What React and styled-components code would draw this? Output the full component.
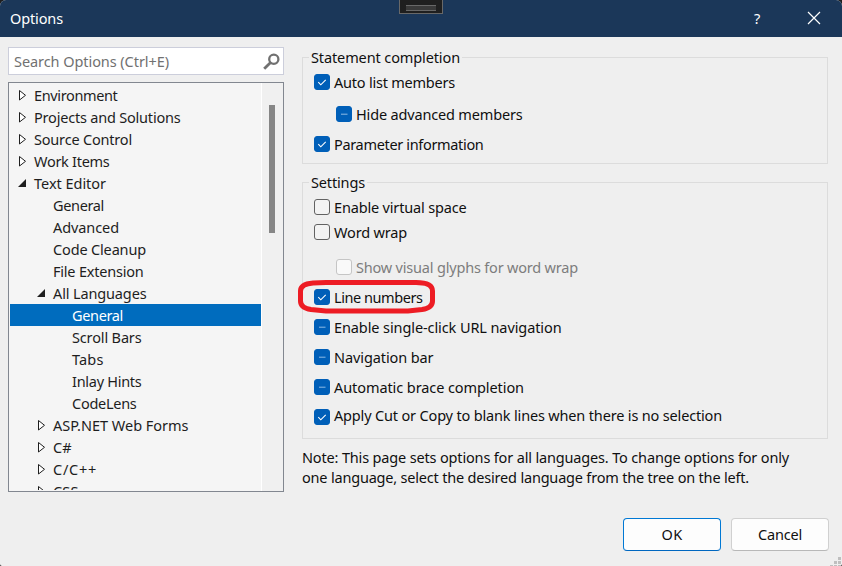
import React, { useLayoutEffect, useRef, useState } from 'react';
import styled, { createGlobalStyle, css } from 'styled-components';

const Global = createGlobalStyle`
  html, body { margin: 0; padding: 0; overflow: hidden; background: #1f1f1f; }
  * { box-sizing: border-box; }
`;

const Window = styled.main`
  position: relative;
  width: 842px;
  height: 566px;
  overflow: hidden;
  display: flex;
  flex-direction: column;
  background: #efefef;
  border-radius: 6px 6px 2px 2px;
  font: 14.5px/20px 'Noto Sans', 'Open Sans', sans-serif;
  color: #101010;
`;

const TitleBar = styled.header`
  height: 37px;
  flex: none;
  display: flex;
  align-items: center;
  padding: 0 20px 2px 10px;
  background: #1b3759;
  color: #fff;
`;

const TitleActions = styled.div`
  margin-left: auto;
  display: flex;
  align-items: center;
  gap: 43px;
`;

const DockHandle = styled.div`
  position: absolute;
  left: 399px;
  top: -1px;
  width: 44px;
  height: 15px;
  padding: 6px 6px 0;
  background: #1f1f1f;
  border: 1px solid #686868;
  &::before {
    content: '';
    display: block;
    height: 4px;
    border: solid #686868;
    border-width: 1px 0;
    background: #3a3a3a;
    margin-top: -1px;
  }
`;

const Body = styled.div`
  flex: 1;
  display: grid;
  grid-template-columns: 276px 526px;
  column-gap: 18px;
  padding: 10px 0 0 8px;
`;

const Sidebar = styled.section`
  display: flex;
  flex-direction: column;
  gap: 7px;
`;

const SearchBox = styled.div`
  height: 28px;
  display: flex;
  align-items: center;
  justify-content: space-between;
  padding: 0 3px 0 5px;
  background: #fff;
  border: 1px solid #cccedb;
  color: #717171;
`;

const Tree = styled.div`
  height: 410px;
  display: flex;
  background: #f5f5f5;
  border: 1px solid #828790;
  overflow: hidden;
  color: #1e1e1e;
`;

const TreeRows = styled.div`
  flex: 1;
  padding: 1px 0 0 1px;
  height: 407px;
  overflow: hidden;
`;

const TreeRow = styled.div`
  height: 22px;
  display: flex;
  align-items: center;
  padding-left: ${(p) => 7 + p.$level * 19}px;
  ${(p) => p.$selected && css`background: #006cbe; color: #fff;`}
`;

const Arrow = styled.span`
  width: 17px;
  height: 22px;
  flex: none;
  svg { display: block; }
`;

const ScrollTrack = styled.div`
  width: 22px;
  border-left: 1px solid #fff;
  background: #f0f0f0;
  padding: 22px 0 0 7px;
`;

const ScrollThumb = styled.div`
  width: 6px;
  height: 128px;
  background: #868686;
`;

const Content = styled.section`
  display: flex;
  flex-direction: column;
  padding-top: 10px;
`;

const Group = styled.section`
  height: ${(p) => p.$height}px;
  border: 1px solid #dcdcdc;
  padding-left: 6px;
  margin-bottom: 18px;
  flex: none;
`;

const Legend = styled.h2`
  width: max-content;
  margin: -11px 0 1px;
  padding: 0 2px;
  height: 20px;
  background: #efefef;
  font: inherit;
`;

const Options = styled.div`
  display: flex;
  flex-direction: column;
  padding-left: 5px;
`;

const Option = styled.div`
  height: 16px;
  display: flex;
  align-items: center;
  gap: 4px;
  margin: ${(p) => p.$before}px 0 0 ${(p) => (p.$nested ? 22 : 0)}px;
  color: ${(p) => (p.$disabled ? '#7d7d7d' : '#101010')};
`;

const OptionText = styled.div`
  margin-top: ${(p) => (p.$raised ? -4 : 0)}px;
`;

const Box = styled.span`
  width: 16px;
  height: 16px;
  flex: none;
  border-radius: 3px;
  border: 1px solid ${(p) => (p.$filled ? '#005fb8' : p.$disabled ? '#c5c5c5' : '#626262')};
  background: ${(p) => (p.$filled ? '#005fb8' : p.$disabled ? '#f9f9f9' : '#f3f3f3')};
  svg { display: block; }
`;

const Note = styled.div`
  margin-top: -10px;
  display: flex;
  flex-direction: column;
  align-items: flex-start;
`;

const Actions = styled.footer`
  display: flex;
  justify-content: flex-end;
  gap: 10px;
  margin: 31px -1px 0 0;
`;

const Button = styled.button`
  width: 98px;
  height: 33px;
  padding: 0 0 2px;
  display: flex;
  align-items: center;
  justify-content: center;
  font: inherit;
  color: #101010;
  background: #fdfdfd;
  border: 1px solid ${(p) => (p.$primary ? '#0078d4' : '#d0d0d0')};
  border-bottom-color: ${(p) => (p.$primary ? '#0067c0' : '#b8b8b8')};
  border-radius: 4px;
`;

const Highlight = styled.svg`
  position: absolute;
  left: 296px;
  top: 278px;
`;

const Grip = styled.svg`
  position: absolute;
  left: 830px;
  top: 557px;
`;

const Run = styled.span`
  display: inline-block;
  white-space: pre;
`;

// Spreads a label's letters so that it takes the given width.
function Label({ children, width }) {
  const ref = useRef(null);
  const [spacing, setSpacing] = useState(0);
  useLayoutEffect(() => {
    ref.current.style.letterSpacing = '0px';
    const natural = ref.current.getBoundingClientRect().width;
    const next = (width - natural) / children.length;
    ref.current.style.letterSpacing = `${next}px`;
    setSpacing(next);
  }, [children, width]);
  return <Run ref={ref} style={{ letterSpacing: spacing }}>{children}</Run>;
}

const tree = [
  ['Environment', 83.5, 0, 'closed'],
  ['Projects and Solutions', 146.5, 0, 'closed'],
  ['Source Control', 98, 0, 'closed'],
  ['Work Items', 75.5, 0, 'closed'],
  ['Text Editor', 72, 0, 'open'],
  ['General', 51, 1],
  ['Advanced', 66, 1],
  ['Code Cleanup', 93, 1],
  ['File Extension', 90.5, 1],
  ['All Languages', 93.5, 1, 'open'],
  ['General', 51, 2],
  ['Scroll Bars', 69.5, 2],
  ['Tabs', 31.5, 2],
  ['Inlay Hints', 69.5, 2],
  ['CodeLens', 64.5, 2],
  ['ASP.NET Web Forms', 135.5, 1, 'closed'],
  ['C#', 18.5, 1, 'closed'],
  ['C/C++', 44, 1, 'closed'],
  ['CSS', 25.5, 1, 'closed'],
];

const completion = [
  { text: 'Auto list members', width: 121, state: 'on', before: 6 },
  { text: 'Hide advanced members', width: 166.5, state: 'mixed', before: 16, nested: true },
  { text: 'Parameter information', width: 149.5, state: 'on', before: 14 },
];

const settings = [
  { text: 'Enable virtual space', width: 132.5, state: 'off', before: 6 },
  { text: 'Word wrap', width: 73, state: 'off', before: 9 },
  { text: 'Show visual glyphs for word wrap', width: 222, state: 'off', before: 19, nested: true, disabled: true },
  { text: 'Line numbers', width: 88.5, state: 'on', before: 14 },
  { text: 'Enable single-click URL navigation', width: 227.5, state: 'mixed', before: 14 },
  { text: 'Navigation bar', width: 99.5, state: 'mixed', before: 14 },
  { text: 'Automatic brace completion', width: 190, state: 'mixed', before: 14 },
  { text: 'Apply Cut or Copy to blank lines when there is no selection', width: 388, state: 'on', before: 14, raised: true },
];

function TreeArrow({ kind }) {
  return (
    <Arrow>
      <svg width="17" height="22" viewBox="0 0 17 22">
        {kind === 'closed' && <path d="M2.5 6.5V16L8.5 11.3Z" fill="#fff" stroke="#1e1e1e" />}
        {kind === 'open' && <path d="M9 7V15H1Z" fill="#1e1e1e" />}
      </svg>
    </Arrow>
  );
}

function OptionItem({ text, width, state, before, nested, disabled, raised }) {
  return (
    <Option $before={before} $nested={nested} $disabled={disabled}>
      <Box $filled={state !== 'off'} $disabled={disabled}>
        <svg width="14" height="14" viewBox="0 0 14 14" fill="none">
          {state === 'on' && <path d="M3.3 7.2L5.8 9.8L10.7 4.8" stroke="#fff" strokeWidth="1.1" />}
          {state === 'mixed' && <path d="M4 7.2H10.500" stroke="#8fbce4" />}
        </svg>
      </Box>
      <OptionText $raised={raised}><Label width={width}>{text}</Label></OptionText>
    </Option>
  );
}

function OptionGroup({ title, titleWidth, height, items }) {
  return (
    <Group $height={height}>
      <Legend><Label width={titleWidth}>{title}</Label></Legend>
      <Options>{items.map((item) => <OptionItem key={item.text} {...item} />)}</Options>
    </Group>
  );
}

export default function App() {
  return (
    <>
      <Global />
      <Window>
        <TitleBar>
          <Label width={53}>Options</Label>
          <TitleActions>
            <Label width={9}>?</Label>
            <svg width="16" height="16" viewBox="0 0 16 16" fill="none" stroke="#fff" strokeWidth="1.2">
              <path d="M2 2L14 14M14 2L2 14" />
            </svg>
          </TitleActions>
        </TitleBar>
        <DockHandle />
        <Body>
          <Sidebar>
            <SearchBox>
              <Label width={155}>Search Options (Ctrl+E)</Label>
              <svg width="17" height="17" viewBox="0 0 17 17" fill="none" stroke="#717171">
                <circle cx="10.8" cy="6.2" r="4.6" strokeWidth="2.3" />
                <path d="M7.6 9.4L1.2 15.8" strokeWidth="2.8" />
              </svg>
            </SearchBox>
            <Tree>
              <TreeRows>
                {tree.map(([text, width, level, kind], i) => (
                  <TreeRow key={i} $level={level} $selected={i === 10}>
                    <TreeArrow kind={kind} />
                    <Label width={width}>{text}</Label>
                  </TreeRow>
                ))}
              </TreeRows>
              <ScrollTrack><ScrollThumb /></ScrollTrack>
            </Tree>
          </Sidebar>
          <Content>
            <OptionGroup title="Statement completion" titleWidth={149} height={107} items={completion} />
            <OptionGroup title="Settings" titleWidth={54} height={257} items={settings} />
            <Note>
              <Label width={487}>Note: This page sets options for all languages. To change options for only</Label>
              <Label width={447}>one language, select the desired language from the tree on the left.</Label>
            </Note>
            <Actions>
              <Button $primary><Label width={21}>OK</Label></Button>
              <Button><Label width={44}>Cancel</Label></Button>
            </Actions>
          </Content>
        </Body>
        <Highlight width="142" height="38" viewBox="0 0 142 38" fill="none">
          <path
            d="M17 5L30 4.5H120Q136.500 4.500 136.500 13V23Q136.500 30 126 31.500L112 33H30L15 31.500Q4.500 30 4.500 23V13Q4.500 6 17 5Z"
            stroke="#ed1c24"
            strokeWidth="5"
          />
        </Highlight>
        <Grip width="12" height="9" viewBox="0 0 12 9" fill="#bfbfbf">
          <path d="M8 0h3v3h-3zM4 4h3v3h-3zM8 4h3v3h-3zM0 8h3v1h-3zM4 8h3v1h-3zM8 8h3v1h-3z" />
        </Grip>
      </Window>
    </>
  );
}
